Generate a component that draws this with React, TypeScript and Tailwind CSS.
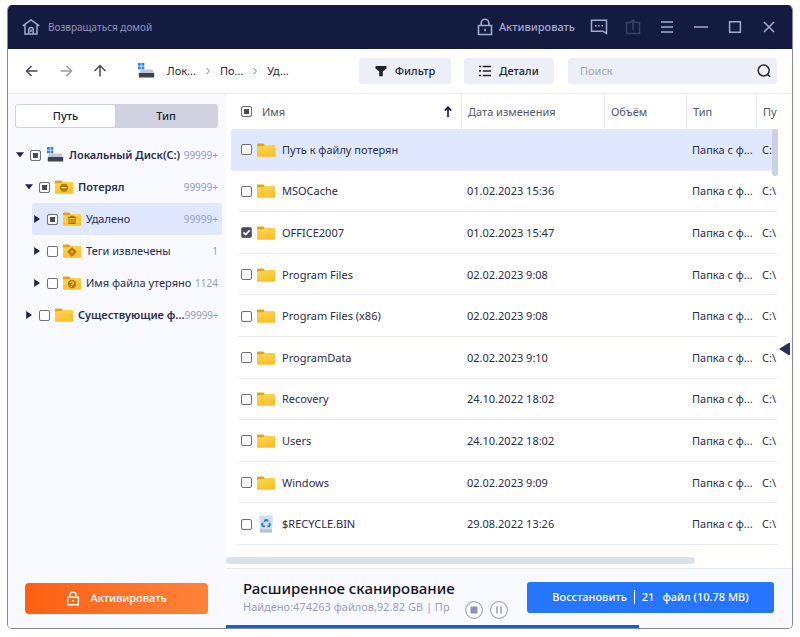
import React from "react";

type CheckState = "off" | "on" | "mixed";
type Badge = "minus" | "trash" | "tag" | "question";

type TreeItem = {
  name: string;
  count: string;
  level: 0 | 1 | 2;
  open?: boolean;
  state: CheckState;
  badge?: Badge;
  active?: boolean;
};

type FileItem = {
  name: string;
  date: string;
  path: string;
  checked?: boolean;
  bin?: boolean;
  active?: boolean;
};

const tree: TreeItem[] = [
  { name: "Локальный Диск(C:)", count: "99999+", level: 0, open: true, state: "mixed" },
  { name: "Потерял", count: "99999+", level: 1, open: true, state: "mixed", badge: "minus" },
  { name: "Удалено", count: "99999+", level: 2, state: "mixed", badge: "trash", active: true },
  { name: "Теги извлечены", count: "1", level: 2, state: "off", badge: "tag" },
  { name: "Имя файла утеряно", count: "1124", level: 2, state: "off", badge: "question" },
  { name: "Существующие ф...", count: "99999+", level: 1, state: "off" },
];

const files: FileItem[] = [
  { name: "Путь к файлу потерян", date: "", path: "C:\\", active: true },
  { name: "MSOCache", date: "01.02.2023 15:36", path: "C:\\" },
  { name: "OFFICE2007", date: "01.02.2023 15:47", path: "C:\\", checked: true },
  { name: "Program Files", date: "02.02.2023 9:08", path: "C:\\" },
  { name: "Program Files (x86)", date: "02.02.2023 9:08", path: "C:\\" },
  { name: "ProgramData", date: "02.02.2023 9:10", path: "C:\\" },
  { name: "Recovery", date: "24.10.2022 18:02", path: "C:\\" },
  { name: "Users", date: "24.10.2022 18:02", path: "C:\\" },
  { name: "Windows", date: "02.02.2023 9:09", path: "C:\\" },
  { name: "$RECYCLE.BIN", date: "29.08.2022 13:26", path: "C:\\", bin: true },
];

const Checkbox = ({ state, label }: { state: CheckState; label: string }) => (
  <span className="relative flex shrink-0">
    <input
      type="checkbox"
      aria-label={label}
      defaultChecked={state === "on"}
      ref={(el) => {
        if (el) el.indeterminate = state === "mixed";
      }}
      className="peer size-[11px] appearance-none rounded-[2px] border border-[#70707a] bg-white checked:bg-[#4b4b55] indeterminate:bg-[#4b4b55] indeterminate:shadow-[inset_0_0_0_2px_white]"
    />
    <svg
      viewBox="0 0 11 11"
      className="pointer-events-none absolute inset-0 hidden size-[11px] peer-checked:block"
    >
      <path d="M2.4 5.3 4.7 7.6 8.7 3.4" fill="none" stroke="#fff" strokeWidth="1.7" />
    </svg>
  </span>
);

const Folder = ({ badge }: { badge?: Badge }) => (
  <svg viewBox="0 0 18 14" className="h-[14px] w-[18px] shrink-0">
    <defs>
      <linearGradient id="folder" x1="0" y1="0" x2="0.3" y2="1">
        <stop offset="0" stopColor="#ffd64f" />
        <stop offset="1" stopColor="#fbc02d" />
      </linearGradient>
    </defs>
    <path d="M0 1.2Q0 .4.8.4H6.4L8 2.2V4H0Z" fill="#dda51c" />
    <path d="M0 3.2H6.2L7.8 2H17.2Q18 2 18 2.8V13Q18 13.8 17.2 13.8H.8Q0 13.8 0 13Z" fill="url(#folder)" />
    {badge === "minus" && (
      <>
        <circle cx="9" cy="7.8" r="4" fill="#b47a08" />
        <path d="M6.8 7.8H11.2" stroke="#ffd95c" strokeWidth="1.4" />
      </>
    )}
    {badge === "trash" && (
      <path
        d="M4.8 5.4H13.2M7.4 5.2V4.2H10.6V5.2M6 6V11.4H12V6M8.2 6.8V10.4M9.9 6.8V10.4"
        fill="none"
        stroke="#a8700a"
        strokeWidth="1.1"
      />
    )}
    {badge === "tag" && (
      <path
        d="M9 3.2 13.6 7.8 9 12.4 4.4 7.8ZM9 6.4A1.4 1.4 0 1 0 9 9.2 1.4 1.4 0 0 0 9 6.4Z"
        fill="#b47a08"
        stroke="#b47a08"
        strokeWidth=".4"
        fillRule="evenodd"
      />
    )}
    {badge === "question" && (
      <>
        <circle cx="9" cy="8" r="4.2" fill="#b47a08" />
        <path
          d="M7.4 6.8Q7.8 5.6 9.2 5.7 10.8 6 10.4 7.3 9.9 8.1 9 8.4L8.7 9.2M8.3 9.9 8.1 10.8"
          fill="none"
          stroke="#ffd95c"
          strokeWidth="1.1"
        />
      </>
    )}
  </svg>
);

const RecycleBin = () => (
  <svg viewBox="0 0 18 18" className="size-[18px] shrink-0">
    <path d="M2 .5H16L14.8 17.5H3.2Z" fill="#d5dde8" />
    <path d="M3 14.5H15L14.8 17.5H3.2Z" fill="#b4bfce" />
    <path
      d="M7.2 6.8 8.4 5H10L11 6.6M12.2 7.8 13 9.4 12 11.4H10.4M8 11.4H6L5 9.6 6 7.8"
      fill="none"
      stroke="#2187dd"
      strokeWidth="1.9"
    />
  </svg>
);

const Disk = () => (
  <svg viewBox="0 0 18 16" className="h-4 w-[18px] shrink-0">
    <path d="M3.4 6.6H15.6L17 10.6H2Z" fill="#c4c6d6" />
    <rect x="1.8" y="10" width="15.4" height="4.6" rx=".6" fill="#3f4050" />
    <path d="M1 0H3.8V2.8H1ZM4.5 0H7.3V2.8H4.5ZM1 3.5H3.8V6.3H1ZM4.5 3.5H7.3V6.3H4.5Z" fill="#2f80f5" />
  </svg>
);

const Lock = ({ className }: { className: string }) => (
  <svg viewBox="0 0 16 18" className={className} fill="none" stroke="currentColor" strokeWidth="1.6">
    <path d="M1.5 7.5H14.5V16.5H1.5ZM4.2 7.2V5A3.8 3.8 0 0 1 11.8 5V7.2M8 10.8V13.2" />
  </svg>
);

const TitleIcon = ({ label, d, dim }: { label: string; d: string; dim?: boolean }) => (
  <button aria-label={label} className={dim ? "text-[#3a4066]" : "text-[#a3a9d0]"}>
    <svg viewBox="0 0 34 20" className="h-5 w-[34px]" fill="none" stroke="currentColor" strokeWidth="1.5">
      <path d={d} />
    </svg>
  </button>
);

const NavArrow = ({ label, d, dim }: { label: string; d: string; dim?: boolean }) => (
  <button aria-label={label} className={dim ? "text-[#9a9aa2]" : "text-[#4a4a55]"}>
    <svg viewBox="0 0 34 16" className="h-4 w-[34px]" fill="none" stroke="currentColor" strokeWidth="1.5">
      <path d={d} />
    </svg>
  </button>
);

const Chevron = () => (
  <svg viewBox="0 0 6 8" className="h-2 w-1.5" fill="none" stroke="#7d7d88">
    <path d="M1.5 1 4.5 4 1.5 7" />
  </svg>
);

const TitleBar = () => (
  <header className="flex h-[44px] shrink-0 items-center bg-[#141b41] pr-[6px] pl-[14px] text-[#a3a9d0]">
    <a href="#home" className="flex items-center gap-2 text-[10px] leading-4 text-[#8f95bd]">
      <svg viewBox="0 0 18 16" className="h-4 w-[18px]" fill="none" stroke="#a3a9d0" strokeWidth="1.5">
        <path d="M.7 6.8 9 1 17.3 6.8M3 5.4V15H15V5.4M6.8 14.8V10.6A2.2 2.2 0 0 1 11.2 10.6V14.8M9 10.5V13" />
      </svg>
      Возвращаться домой
    </a>
    <button className="mr-[7px] ml-auto flex items-center gap-[6px] text-[11px] font-medium">
      <Lock className="h-[18px] w-4" />
      Активировать
    </button>
    <TitleIcon
      label="Сообщения"
      d="M9.5 3.2H24.5V16.5L20.8 14.2H9.5ZM13 8.7H14.6M16.2 8.7H17.8M19.4 8.7H21"
    />
    <TitleIcon label="Экспорт" dim d="M14 5.5H10.5V16.5H23.5V5.5H20M17 13V3M14.4 5.6 17 3 19.6 5.6" />
    <TitleIcon label="Меню" d="M11 5H23M11 10H23M11 15H23" />
    <TitleIcon label="Свернуть" d="M10 10H24" />
    <TitleIcon label="Развернуть" d="M11.6 4.8H22.4V15.2H11.6Z" />
    <TitleIcon label="Закрыть" d="M12 5 22 15M22 5 12 15" />
  </header>
);

const Toolbar = () => (
  <nav className="flex h-[45px] shrink-0 items-center border-b border-[#edeff5] pr-[15px] pl-[7px] text-[11px]">
    <NavArrow label="Назад" d="M22.5 8H11.5M16.5 3 11.5 8 16.5 13" />
    <NavArrow label="Вперёд" dim d="M11.5 8H22.5M17.5 3 22.5 8 17.5 13" />
    <NavArrow label="Вверх" d="M17 13.5V2.5M11.5 8 17 2.5 22.5 8" />
    <div className="ml-5 flex items-center text-[#2a2a38]">
      <Disk />
      <a href="#disk" className="ml-3">Лок...</a>
      <span className="mx-[9px]"><Chevron /></span>
      <a href="#lost">По...</a>
      <span className="mx-[9px]"><Chevron /></span>
      <a href="#deleted">Уд...</a>
    </div>
    <button className="ml-auto flex h-[26px] w-[92px] items-center justify-center gap-2 rounded-[3px] bg-[#eceef8] font-medium text-[#22222e]">
      <svg viewBox="0 0 12 12" className="size-3" fill="currentColor">
        <path d="M.5 1H11.5V3.4L7.8 6.4V11.2H4.2V6.4L.5 3.4Z" />
      </svg>
      Фильтр
    </button>
    <button className="ml-[13px] flex h-[26px] w-[90px] items-center justify-center gap-2 rounded-[3px] bg-[#eceef8] font-medium text-[#22222e]">
      <svg viewBox="0 0 12 12" className="size-3" fill="none" stroke="currentColor" strokeWidth="1.5">
        <path d="M0 1.4H2M3.8 1.4H12M0 6H2M3.8 6H12M0 10.6H2M3.8 10.6H12" />
      </svg>
      Детали
    </button>
    <label className="ml-[14px] flex h-[26px] w-[209px] items-center rounded-[3px] bg-[#eceef8] pr-[6px] pl-3">
      <input
        aria-label="Поиск"
        placeholder="Поиск"
        className="min-w-0 flex-1 bg-transparent text-[#2a2a38] outline-none placeholder:text-[#a3a4b5]"
      />
      <svg viewBox="0 0 14 14" className="size-[14px]" fill="none" stroke="#2a2a38" strokeWidth="1.5">
        <circle cx="6.7" cy="6.5" r="5.5" />
        <path d="M10.4 10.2 13 12.8" />
      </svg>
    </label>
  </nav>
);

const indent = {
  0: "ml-[7px]",
  1: "ml-[16px]",
  2: "ml-[24px]",
};

const Sidebar = () => (
  <aside className="flex w-[218px] shrink-0 flex-col bg-[#f9faff] pt-[10px] pb-[14px]">
    <div className="mr-2 ml-[7px] flex h-6 rounded-[3px] border border-[#cfd1e0] bg-[#cfd1e0] text-[11px] font-medium text-[#20202c]">
      <button className="w-[99px] rounded-[2px] bg-white">Путь</button>
      <button className="flex-1">Тип</button>
    </div>
    <ul className="mt-[11px] text-[11px] leading-4 text-[#272b4e]">
      {tree.map((item) => (
        <li
          key={item.name}
          className={`mr-1 flex h-8 items-center rounded-[3px] pr-1 ${indent[item.level]} ${
            item.active ? "bg-[#dfe8ff]" : ""
          }`}
        >
          <button aria-label={item.name} className="flex w-[10px] shrink-0 justify-center">
            <svg viewBox="0 0 8 8" className="size-2" fill="#1f2550">
              <path d={item.open ? "M0 1.2H8L4 6.6Z" : "M1.2 0V8L7 4Z"} />
            </svg>
          </button>
          <span className="mx-[5px] flex">
            <Checkbox state={item.state} label={item.name} />
          </span>
          {item.level === 0 ? <Disk /> : <Folder badge={item.badge} />}
          <a
            href="#folder"
            className={`ml-[5px] flex-1 whitespace-nowrap ${item.level < 2 ? "font-semibold" : ""}`}
          >
            {item.name}
          </a>
          <span className="text-[10px] text-[#949bc4]">{item.count}</span>
        </li>
      ))}
    </ul>
    <button className="mt-auto mr-[18px] ml-[17px] flex h-[31px] items-center justify-center gap-2.5 rounded-[4px] bg-linear-to-r from-[#ff5f10] to-[#ff8338] text-[11px] font-medium text-white">
      <Lock className="h-[15px] w-[14px]" />
      Активировать
    </button>
  </aside>
);

const th = "border-l border-[#e6e8f0] pl-[6px] text-left font-normal whitespace-nowrap";
const td = "border-b border-[#e9ebf2] p-0 pt-px whitespace-nowrap";

const FileTable = () => (
  <div className="relative ml-[5px] min-w-0 flex-1 overflow-hidden">
    <table className="h-full w-full table-fixed border-separate border-spacing-0 text-[11px] leading-[18px] text-[#2a2d48]">
      <colgroup>
        <col className="w-[7px]" />
        <col />
        <col className="w-[143px]" />
        <col className="w-[82px]" />
        <col className="w-[70px]" />
        <col className="w-[22px]" />
      </colgroup>
      <thead className="text-[#55566a]">
        <tr className="h-[35px]">
          <td />
          <th className="p-0 text-left font-normal">
            <div className="flex items-center pl-[3px]">
              <Checkbox state="mixed" label="Выбрать все" />
              <span className="ml-2.5 flex-1">Имя</span>
              <svg viewBox="0 0 8 11" className="mr-[9px] h-[11px] w-2" fill="none" stroke="#0e1238" strokeWidth="1.6">
                <path d="M4 11V1.2M.8 4.6 4 1.2 7.2 4.6" />
              </svg>
            </div>
          </th>
          <th className={th}>Дата изменения</th>
          <th className={th}>Объём</th>
          <th className={th}>Тип</th>
          <th className={th}>Пу</th>
        </tr>
      </thead>
      <tbody>
        {files.map((file) => (
          <tr key={file.name} className={file.active ? "*:bg-[#dfe8ff]" : ""}>
            <td className="rounded-l-[3px] p-0" />
            <td className={td}>
              <div className="flex items-center pl-[3px]">
                <Checkbox state={file.checked ? "on" : "off"} label={file.name} />
                <span className="mr-[7px] ml-[5px] flex">
                  {file.bin ? <RecycleBin /> : <Folder />}
                </span>
                {file.name}
              </div>
            </td>
            <td className={`${td} pl-[6px]`}>{file.date}</td>
            <td className={td} />
            <td className={`${td} pl-[6px]`}>Папка с ф...</td>
            <td className={`${td} pl-[6px]`}>{file.path}</td>
          </tr>
        ))}
      </tbody>
    </table>
    <div className="absolute top-[35px] right-0 h-[47px] w-[6px] rounded-full bg-[#c9d1e2]" />
  </div>
);

const ScanFooter = () => (
  <footer className="flex h-[60px] shrink-0 flex-col border-t border-[#e9ebf2] bg-[#f9faff]">
    <div className="flex flex-1 items-center pr-[18px] pl-[17px]">
      <div className="whitespace-nowrap">
        <h2 className="text-[15px] leading-5 font-medium text-[#14141f]">Расширенное сканирование</h2>
        <p className="text-[11px] leading-[18px] text-[#9a9dc2]">
          Найдено:474263 файлов,92.82 GB | Пр
        </p>
      </div>
      <div className="ml-2.5 flex gap-[7px] self-end pb-[6px] text-[#8f92bd]">
        <button aria-label="Остановить">
          <svg viewBox="0 0 18 18" className="size-[18px]" fill="none" stroke="currentColor">
            <circle cx="9" cy="9" r="8.4" />
            <path d="M6 6H12V12H6Z" fill="currentColor" />
          </svg>
        </button>
        <button aria-label="Пауза">
          <svg viewBox="0 0 18 18" className="size-[18px]" fill="none" stroke="currentColor">
            <circle cx="9" cy="9" r="8.4" />
            <path d="M7 5.5V12.5M11 5.5V12.5" strokeWidth="1.4" />
          </svg>
        </button>
      </div>
      <button className="ml-auto flex h-[31px] w-[247px] items-center justify-center rounded-[3px] bg-[#2575ff] text-[11px] font-medium text-white">
        Восстановить
        <span className="mx-[7px] h-[14px] w-px bg-white" />
        <span className="mr-2">21</span>
        файл (10.78 MB)
      </button>
    </div>
    <div className="h-[3px] w-[73%] bg-[#1560d4]" />
  </footer>
);

const App = () => (
  <div className="h-screen bg-white px-[7px] pt-[5px] pb-[8px] font-['Noto_Sans',sans-serif]">
    <div className="flex h-full flex-col overflow-hidden rounded-[5px] border border-t-0 border-[#8587a9] bg-white">
      <TitleBar />
      <Toolbar />
      <div className="flex min-h-0 flex-1">
        <Sidebar />
        <main className="flex min-w-0 flex-1 flex-col">
          <div className="flex min-h-0 flex-1">
            <div className="flex min-w-0 flex-1 flex-col">
              <FileTable />
              <div className="mt-3 mb-1 h-[7px] w-[85%] rounded-full bg-[#dce2ea]" />
            </div>
            <div className="flex w-[14px] items-center justify-end pt-9 pr-0.5">
              <button aria-label="Показать панель">
                <svg viewBox="0 0 11 12" className="h-3 w-[11px]" fill="#2b2d5e">
                  <path d="M11 0V12H9.5L0 6 9.5 0Z" />
                </svg>
              </button>
            </div>
          </div>
          <ScanFooter />
        </main>
      </div>
    </div>
  </div>
);

export default App;
